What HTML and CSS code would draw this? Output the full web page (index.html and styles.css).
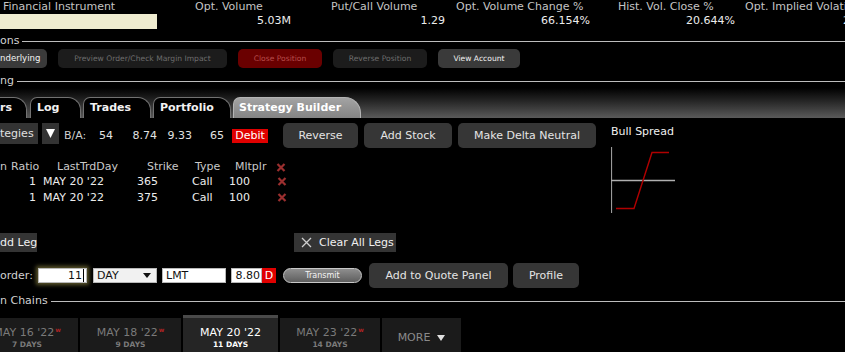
FILE: index.html
```html
<!DOCTYPE html>
<html>
<head>
<meta charset="utf-8">
<link rel="stylesheet" href="styles.css">
</head>
<body>
<div class="quote">
  <div class="qcol c1"><div class="qlbl">Financial Instrument</div><div class="instr"></div></div>
  <div class="qcol c2"><div class="qlbl">Opt. Volume</div><div class="qval">5.03M</div></div>
  <div class="qcol c3"><div class="qlbl">Put/Call Volume</div><div class="qval">1.29</div></div>
  <div class="qcol c4"><div class="qlbl">Opt. Volume Change %</div><div class="qval">66.154%</div></div>
  <div class="qcol c5"><div class="qlbl">Hist. Vol. Close %</div><div class="qval">20.644%</div></div>
  <div class="qcol c6"><div class="qlbl">Opt. Implied Volatility %</div><div class="qval">22.519%</div></div>
</div>

<div class="section sec-actions"><span>ons</span><div class="rule"></div></div>
<div class="actions">
  <div class="abtn on cut">nderlying</div>
  <div class="abtn w169">Preview Order/Check Margin Impact</div>
  <div class="abtn red w84">Close Position</div>
  <div class="abtn w94">Reverse Position</div>
  <div class="abtn on w82">View Account</div>
</div>

<div class="section sec-trading"><span>ng</span><div class="rule"></div></div>
<div class="tabbar">
  <div class="tab t1">rs</div>
  <div class="tab t2">Log</div>
  <div class="tab t3">Trades</div>
  <div class="tab t4">Portfolio</div>
  <div class="tab t5 active">Strategy Builder</div>
</div>

<div class="main">
  <div class="left">
    <div class="strat">
      <div class="sel">tegies</div>
      <div class="selarrow"><svg width="9" height="9" viewBox="0 0 9 9"><polygon points="0,0 9,0 4.5,9" fill="#fff"/></svg></div>
      <span class="ba">B/A:</span>
      <span class="num n1">54</span>
      <span class="num n2">8.74</span>
      <span class="num n3">9.33</span>
      <span class="num n4">65</span>
      <span class="debit">Debit</span>
      <div class="btn b-rev">Reverse</div>
      <div class="btn b-add">Add Stock</div>
      <div class="btn b-delta">Make Delta Neutral</div>
    </div>

    <div class="legs">
      <div class="lrow lh">
        <span>n</span><span>Ratio</span><span>LastTrdDay</span><span>Strike</span><span>Type</span><span>Mltplr</span>
        <span><svg class="xi" width="10" height="9" viewBox="0 0 10 9"><path d="M1.5 1 L8.5 8 M8.5 1 L1.5 8" stroke="#9b2f2f" stroke-width="2.2"/></svg></span>
      </div>
      <div class="lrow ld">
        <span></span><span>1</span><span>MAY 20 '22</span><span>365</span><span>Call</span><span>100</span>
        <span><svg class="xi" width="10" height="9" viewBox="0 0 10 9"><path d="M1.5 1 L8.5 8 M8.5 1 L1.5 8" stroke="#9b2f2f" stroke-width="2.2"/></svg></span>
      </div>
      <div class="lrow ld">
        <span></span><span>1</span><span>MAY 20 '22</span><span>375</span><span>Call</span><span>100</span>
        <span><svg class="xi" width="10" height="9" viewBox="0 0 10 9"><path d="M1.5 1 L8.5 8 M8.5 1 L1.5 8" stroke="#9b2f2f" stroke-width="2.2"/></svg></span>
      </div>
    </div>

    <div class="legbtns">
      <div class="sqbtn addleg">dd Leg</div>
      <div class="sqbtn clear"><svg width="11" height="11" viewBox="0 0 11 11"><path d="M1 1 L10 10 M10 1 L1 10" stroke="#cfcfcf" stroke-width="1.3"/></svg><span>Clear All Legs</span></div>
    </div>

    <div class="order">
      <span class="olbl">order:</span>
      <div class="inp qty"><span class="caret">11</span></div>
      <div class="inp tif"><span>DAY</span><svg width="8" height="5" viewBox="0 0 8 5"><polygon points="0,0 8,0 4,5" fill="#111"/></svg></div>
      <div class="inp otype">LMT</div>
      <div class="inp price">8.80</div>
      <div class="dbadge">D</div>
      <div class="transmit">Transmit</div>
      <div class="btn b-quote">Add to Quote Panel</div>
      <div class="btn b-prof">Profile</div>
    </div>
  </div>

  <div class="right">
    <div class="stitle">Bull Spread</div>
    <svg class="payoff" width="66" height="67" viewBox="0 0 66 67">
      <line x1="0.5" y1="0" x2="0.5" y2="66" stroke="#9a9a9a" stroke-width="1.2"/>
      <line x1="0" y1="33.5" x2="64" y2="33.5" stroke="#b0b0b0" stroke-width="1.4"/>
      <polyline points="5,61.5 23,61.5 41,5.5 58,5.5" fill="none" stroke="#b00000" stroke-width="1.4"/>
    </svg>
  </div>
</div>

<div class="section sec-chains"><span>n Chains</span><div class="rule"></div></div>
<div class="chains">
  <div class="ctab w102"><div class="cd">MAY 16 '22<sup>w</sup></div><div class="cdays">7 DAYS</div></div>
  <div class="ctab w101"><div class="cd">MAY 18 '22<sup>w</sup></div><div class="cdays">9 DAYS</div></div>
  <div class="ctab cur w95"><div class="cd">MAY 20 '22</div><div class="cdays">11 DAYS</div></div>
  <div class="ctab w100"><div class="cd">MAY 23 '22<sup>w</sup></div><div class="cdays">14 DAYS</div></div>
  <div class="ctab more w79"><span>MORE</span><svg width="8" height="6" viewBox="0 0 8 6"><polygon points="0,0 8,0 4,6" fill="#e0e0e0"/></svg></div>
</div>
</body>
</html>
```
FILE: styles.css
```css
* { box-sizing: border-box; }
html, body { margin: 0; padding: 0; }
body {
  width: 845px;
  height: 352px;
  overflow: hidden;
  background: #000;
  color: #e6e6e6;
  font-family: "DejaVu Sans", sans-serif;
  font-size: 11px;
  line-height: 14px;
}

/* quote header */
.quote { display: flex; height: 30px; white-space: nowrap; }
.qcol { flex: none; display: flex; flex-direction: column; overflow: visible; }
.qlbl { color: #c4c4c4; height: 14px; }
.qval { height: 14px; text-align: right; color: #ececec; }
.c1 { width: 160px; }
.c1 .qlbl { padding-left: 3px; }
.instr { width: 157px; height: 15px; background: #efecd0; }
.c2 { width: 131px; }
.c2 .qlbl { padding-left: 35px; }
.c3 { width: 154px; }
.c3 .qlbl { padding-left: 40px; }
.c4 { width: 145px; }
.c4 .qlbl { padding-left: 11px; }
.c5 { width: 145px; }
.c5 .qlbl { padding-left: 28px; }
.c6 { width: 157px; }
.c6 .qlbl { padding-left: 10px; }

/* section titles */
.section { display: flex; align-items: center; height: 14px; color: #d2d2d2; white-space: nowrap; }
.section .rule { flex: 1; height: 1px; background: #bdbdbd; margin-left: 3px; }
.sec-actions { margin-top: 4px; }
.sec-trading { margin-top: 6px; }
.sec-chains { margin-top: 6px; }

/* action buttons */
.actions { display: flex; gap: 11px; margin-top: 1px; height: 19px; }
.abtn {
  height: 19px;
  border-radius: 5px;
  font-size: 7.6px;
  line-height: 19px;
  text-align: center;
  background: #1c1c1c;
  color: #6d6d6d;
  white-space: nowrap;
}
.abtn.on { background: #3a3a3a; color: #f2f2f2; }
.abtn.cut { width: 47px; border-radius: 0 5px 5px 0; text-align: left; font-size: 8.6px; }
.abtn.red { background: #6a0000; color: #b84c4c; }
.w169 { width: 169px; }
.w84 { width: 84px; }
.w94 { width: 94px; }
.w82 { width: 82px; }

/* tab bar */
.tabbar {
  display: flex;
  align-items: flex-end;
  gap: 2px;
  height: 30px;
  background: linear-gradient(#000 0%, #1e1e1e 35%, #5a5a5a 100%);
}
.tab {
  height: 21px;
  border: 1px solid #727272;
  border-bottom: 0;
  border-radius: 7px 13px 0 0;
  background: #000;
  color: #f2f2f2;
  font-weight: bold;
  line-height: 19px;
  padding-left: 6px;
  white-space: nowrap;
}
.t1 { width: 27px; padding-left: 0; border-left: 0; border-radius: 0 13px 0 0; }
.t2 { width: 51px; margin-left: 1px; padding-left: 6px; }
.t3 { width: 68px; }
.t4 { width: 78px; }
.t5 { width: 128px; padding-left: 5px; }
.tab.active {
  background: linear-gradient(#a3a3a3, #848484);
  border-color: #b4b4b4;
  color: #fff;
  border-radius: 7px 16px 0 0;
}

/* main strategy area */
.main { display: flex; margin-top: 5px; }
.left { width: 611px; flex: none; }
.right { flex: 1; padding-top: 2px; }
.stitle { color: #f0f0f0; height: 14px; }
.payoff { display: block; margin-top: 8px; }

.strat { display: flex; align-items: center; height: 25px; white-space: nowrap; }
.sel {
  width: 38px; height: 21px; align-self: flex-start;
  background: #333; color: #e0e0e0; line-height: 21px;
}
.selarrow {
  width: 17px; height: 21px; align-self: flex-start; margin-left: 4px;
  background: #333; display: flex; align-items: center; justify-content: center;
}
.ba { margin-left: 5px; width: 24px; color: #cfcfcf; }
.num { text-align: right; color: #e2e2e2; display: inline-block; }
.n1 { width: 25px; }
.n2 { width: 44px; }
.n3 { width: 35px; }
.n4 { width: 32px; }
.debit {
  margin-left: 8px; width: 36px; height: 14px; line-height: 14px;
  background: #e00000; color: #fff; text-align: center;
}
.btn {
  height: 25px; border-radius: 5px; background: #363636; color: #e4e4e4;
  line-height: 25px; text-align: center; white-space: nowrap;
}
.b-rev { width: 75px; margin-left: 15px; }
.b-add { width: 88px; margin-left: 6px; }
.b-delta { width: 138px; margin-left: 6px; }

/* legs table */
.legs { margin-top: 12px; }
.lrow {
  display: grid;
  grid-template-columns: 11px 29px 90px 55px 40px 47px 18px;
  white-space: nowrap;
}
.lh { height: 14px; color: #c9c9c9; }
.ld { height: 16px; line-height: 16px; color: #ececec; }
.lh span:nth-child(3) { padding-left: 17px; }
.lh span:nth-child(4) { padding-left: 17px; }
.lh span:nth-child(5) { padding-left: 10px; }
.lh span:nth-child(6) { padding-left: 10px; }
.lh span:nth-child(7) { padding-left: 4px; }
.ld span:nth-child(2) { text-align: right; padding-right: 4px; }
.ld span:nth-child(3) { padding-left: 3px; }
.ld span:nth-child(4) { padding-left: 7px; }
.ld span:nth-child(5) { padding-left: 7px; }
.ld span:nth-child(6) { padding-left: 4px; }
.ld span:nth-child(7) { padding-left: 5px; }
.xi { display: block; margin-top: 3px; }

/* legs buttons */
.legbtns { display: flex; margin-top: 27px; height: 19px; }
.sqbtn { height: 19px; background: #343434; color: #f0f0f0; line-height: 19px; white-space: nowrap; }
.addleg { width: 37px; }
.clear {
  margin-left: 257px; width: 102px; padding-left: 7px;
  display: flex; align-items: center; gap: 7px;
}

/* order row */
.order { display: flex; align-items: center; margin-top: 11px; height: 25px; white-space: nowrap; }
.olbl { width: 30px; color: #d0d0d0; }
.inp {
  height: 15px; background: #fff; color: #111; line-height: 13px;
  border: 1px solid #b8b8b8;
}
.qty {
  margin-left: 8px; width: 49px; text-align: right; padding-right: 2px;
  box-shadow: 0 0 4px 2px rgba(170, 160, 80, 0.55);
}
.caret { border-right: 1px solid #000; padding-right: 1px; }
.tif {
  margin-left: 6px; width: 64px; background: #f1f1f1; padding: 0 5px 0 3px;
  display: flex; align-items: center; justify-content: space-between;
}
.otype { margin-left: 5px; width: 64px; padding-left: 3px; }
.price { margin-left: 5px; width: 31px; text-align: right; padding-right: 1px; }
.dbadge { width: 14px; height: 15px; line-height: 15px; background: #e00000; color: #fff; text-align: center; }
.transmit {
  margin-left: 7px; width: 79px; height: 15px; border-radius: 8px;
  border: 1px solid #c8c8c8;
  background: linear-gradient(#8e8e8e, #5e5e5e);
  color: #f4f4f4; font-size: 8px; line-height: 13px; text-align: center;
}
.b-quote { margin-left: 7px; width: 139px; }
.b-prof { margin-left: 5px; width: 66px; }

/* option chains */
.chains { display: flex; gap: 2px; margin-top: 7px; margin-left: -24px; height: 40px; }
.ctab {
  flex: none; margin-top: 3px; background: #1b1b1b; color: #7a7a7a;
  text-align: center; white-space: nowrap; padding-top: 8px;
}
.ctab.cur {
  margin-top: 0; border-top: 3px solid #4a4a4a; background: #252525; color: #fff;
}
.cd { height: 14px; line-height: 14px; }
.cd sup { font-size: 6px; color: #b02424; font-weight: bold; vertical-align: top; line-height: 8px; margin-left: 1px; }
.cdays { font-size: 7.5px; font-weight: bold; line-height: 9px; height: 9px; }
.ctab.more { display: flex; justify-content: center; align-items: center; gap: 7px; padding-top: 2px; color: #8a8a8a; }
.w102 { width: 102px; }
.w101 { width: 101px; }
.w95 { width: 95px; }
.w100 { width: 100px; }
.w79 { width: 79px; }
```
